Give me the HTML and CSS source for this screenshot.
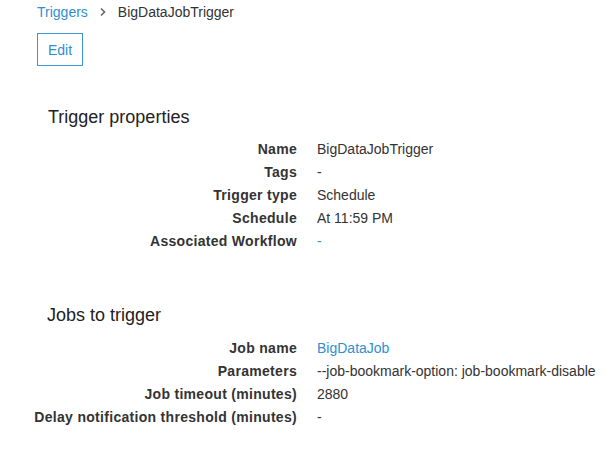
FILE: index.html
```html
<!DOCTYPE html>
<html>
<head>
<meta charset="utf-8">
<link rel="stylesheet" href="styles.css">
</head>
<body>
<div class="page">
  <nav class="crumbs">
    <a class="link" href="#">Triggers</a>
    <svg class="chev" width="8" height="10" viewBox="0 0 8 10"><path d="M2 1.5 L5.5 5 L2 8.5" fill="none" stroke="#666" stroke-width="1.6"/></svg>
    <span class="current">BigDataJobTrigger</span>
  </nav>
  <button class="btn">Edit</button>

  <section class="section first">
    <h2 class="title">Trigger properties</h2>
    <dl class="props">
      <dt>Name</dt><dd>BigDataJobTrigger</dd>
      <dt>Tags</dt><dd>-</dd>
      <dt>Trigger type</dt><dd>Schedule</dd>
      <dt>Schedule</dt><dd>At 11:59 PM</dd>
      <dt>Associated Workflow</dt><dd class="link">-</dd>
    </dl>
  </section>

  <section class="section second">
    <h2 class="title">Jobs to trigger</h2>
    <dl class="props">
      <dt>Job name</dt><dd class="link">BigDataJob</dd>
      <dt>Parameters</dt><dd>--job-bookmark-option: job-bookmark-disable</dd>
      <dt>Job timeout (minutes)</dt><dd>2880</dd>
      <dt>Delay notification threshold (minutes)</dt><dd>-</dd>
    </dl>
  </section>
</div>
</body>
</html>
```
FILE: styles.css
```css
html, body {
  margin: 0;
  padding: 0;
  background: #fff;
  overflow: hidden;
}
body {
  font-family: "Liberation Sans", Arial, sans-serif;
  font-size: 14px;
  color: #333;
}
.page {
  padding: 3px 0 0 37px;
}
.link {
  color: #2f8fd1;
  text-decoration: none;
}
.crumbs {
  display: flex;
  align-items: center;
  height: 18px;
  font-size: 14px;
}
.chev {
  margin: 0 11px 0 11px;
}
.current {
  color: #333;
}
.btn {
  margin-top: 12px;
  width: 46px;
  height: 33px;
  border: 1px solid #3a96d6;
  background: #fff;
  color: #2f8fd1;
  font-family: inherit;
  font-size: 14px;
  padding: 0;
  display: block;
}
.first {
  margin-top: 40px;
  padding-left: 11px;
}
.second {
  margin-top: 54px;
  padding-left: 10px;
}
.title {
  font-size: 18px;
  font-weight: normal;
  color: #222;
  margin: 0 0 13px 0;
  line-height: 22px;
}
.props {
  display: grid;
  grid-template-columns: 263px auto;
  column-gap: 20px;
  row-gap: 6px;
  margin: 0;
  line-height: 17px;
}
.first .props {
  margin-left: -14px;
}
.second .props {
  margin-left: -13px;
}
.second .title {
  margin-bottom: 14px;
}
.props dt {
  font-weight: bold;
  text-align: right;
  white-space: nowrap;
  letter-spacing: 0.3px;
  color: #333;
}
.props dd {
  margin: 0;
  white-space: nowrap;
}
.props dd.link {
  color: #2f8fd1;
}
```
